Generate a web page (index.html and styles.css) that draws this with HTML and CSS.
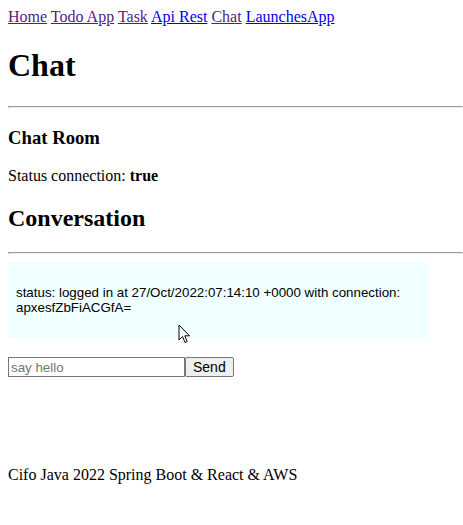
FILE: index.html
```html
<!DOCTYPE html>
<html>
<head>
<meta charset="utf-8">
<link rel="stylesheet" href="styles.css">
</head>
<body>
<nav class="nav">
<a class="visited" href="#">Home</a> <a class="visited" href="#">Todo App</a> <a class="visited" href="#">Task</a> <a class="fresh" href="#">Api Rest</a> <a class="visited" href="#">Chat</a> <a class="fresh" href="#">LaunchesApp</a>
</nav>
<h1>Chat</h1>
<hr class="rule">
<h3>Chat Room</h3>
<p>Status connection: <b>true</b></p>
<h2>Conversation</h2>
<hr class="rule">
<div class="messages">
<p class="msg">status: logged in at 27/Oct/2022:07:14:10 +0000 with connection: apxesfZbFiACGfA=</p>
<svg class="cursor" width="14" height="20" viewBox="0 0 14 20"><path d="M1 1 L1 16 L4.5 12.5 L7 18.5 L9.2 17.5 L6.8 11.8 L11.5 11.8 Z" fill="#fff" stroke="#000" stroke-width="1" stroke-linejoin="round"/></svg>
</div>
<form class="sendform"><input class="field" type="text" placeholder="say hello"><button class="btn" type="button">Send</button></form>
<footer class="footer">Cifo Java 2022 Spring Boot &amp; React &amp; AWS</footer>
</body>
</html>
```
FILE: styles.css
```css
body {
  font-family: "Liberation Serif", "Times New Roman", serif;
  margin: 8px 0 8px 8px;
}
.nav a.visited { color: #551a8b; }
.nav a.fresh { color: #0000ee; }
.rule {
  margin-left: 0;
  margin-right: 0;
}
.messages {
  position: relative;
  background: #f0ffff;
  width: 404px;
  padding: 10px 8px;
  margin-top: 8px;
  font-family: "Liberation Sans", Arial, sans-serif;
  font-size: 13.33px;
}
.msg {
  margin: 13px 0;
  line-height: 15px;
}
.cursor {
  position: absolute;
  left: 170px;
  top: 62px;
}
.sendform {
  margin-top: 19px;
  display: flex;
}
.field {
  font-family: "Liberation Sans", Arial, sans-serif;
  font-size: 13.33px;
  width: 171px;
  margin: 0;
  padding: 2px 2px 1px;
  border: 1px solid #767676;
  border-radius: 0;
}
.btn {
  font-family: "Liberation Sans", Arial, sans-serif;
  font-size: 14px;
  margin: 0;
  padding: 1px 7px;
  border: 1px solid #767676;
  border-radius: 2px;
  background: #efefef;
}
.footer {
  margin-top: 89px;
}
```
